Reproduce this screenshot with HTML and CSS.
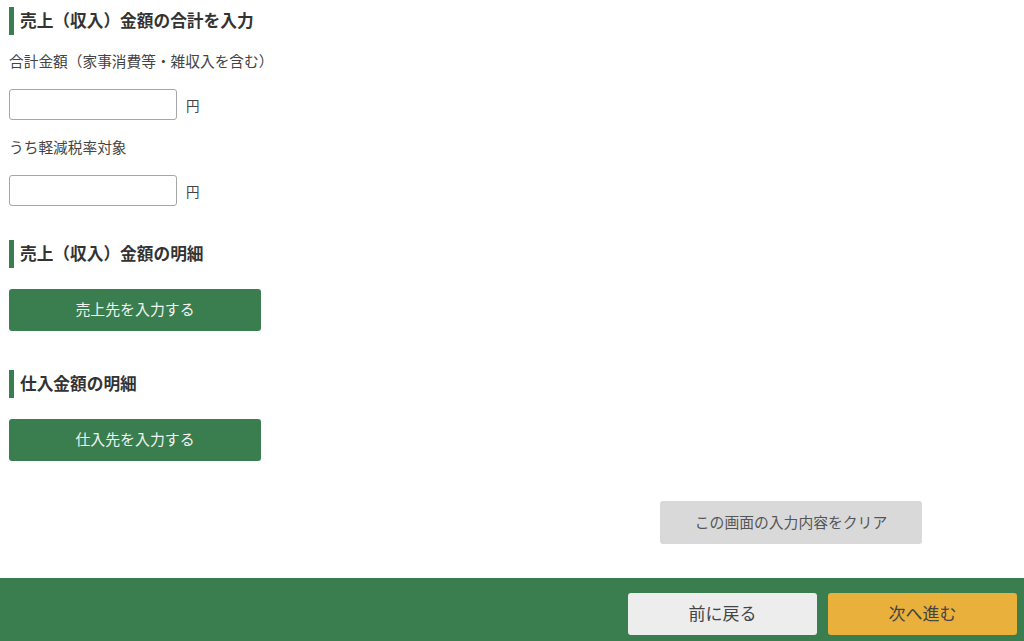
FILE: index.html
```html
<!DOCTYPE html>
<html lang="ja">
<head>
    <meta charset="UTF-8">
    <meta name="viewport" content="width=device-width, initial-scale=1.0">
    <title>売上（収入）金額の入力</title>
    <link rel="stylesheet" href="styles.css">
</head>
<body>
    <div class="page">
        <main class="content">
            <h2 class="section-title">売上（収入）金額の合計を入力</h2>
            <div class="field">
                <label for="total">合計金額（家事消費等・雑収入を含む）</label>
                <div class="amount">
                    <input type="text" id="total">
                    <span class="unit">円</span>
                </div>
            </div>
            <div class="field">
                <label for="reduced">うち軽減税率対象</label>
                <div class="amount">
                    <input type="text" id="reduced">
                    <span class="unit">円</span>
                </div>
            </div>

            <h2 class="section-title spaced">売上（収入）金額の明細</h2>
            <button class="btn-green">売上先を入力する</button>

            <h2 class="section-title spaced">仕入金額の明細</h2>
            <button class="btn-green">仕入先を入力する</button>

            <div class="clear-row">
                <button class="btn-clear">この画面の入力内容をクリア</button>
            </div>
        </main>

        <footer class="footer">
            <button class="btn-back">前に戻る</button>
            <button class="btn-next">次へ進む</button>
        </footer>
    </div>
</body>
</html>
```

FILE: styles.css
```css
body {
    margin: 0;
    font-family: "Noto Sans CJK JP", "Noto Sans", sans-serif;
    color: #333;
    background: #fff;
}

.page {
    display: flex;
    flex-direction: column;
    height: 100vh;
}

.content {
    flex: 1;
    width: 913px;
    padding: 7px 0 0 9px;
    display: flex;
    flex-direction: column;
    align-items: flex-start;
}

.section-title {
    margin: 0;
    height: 28px;
    line-height: 27px;
    border-left: 5px solid #3a7d4f;
    padding-left: 6px;
    font-size: 16.7px;
    font-weight: bold;
    color: #333;
}

.section-title.spaced {
    margin-top: 34px;
}

.field {
    margin-top: 16px;
}

.field + .field {
    margin-top: 17px;
}

label {
    display: block;
    font-size: 14.7px;
    line-height: 20px;
    color: #444;
    margin-bottom: 18px;
}

.amount {
    display: flex;
    align-items: center;
    gap: 9px;
}

input[type="text"] {
    width: 168px;
    height: 31px;
    box-sizing: border-box;
    border: 1px solid #a6a6a6;
    border-radius: 3px;
    padding: 4px 6px;
    font-size: 14px;
}

.unit {
    font-size: 13.5px;
    color: #444;
}

button {
    font-family: inherit;
    border: none;
    border-radius: 3px;
    cursor: pointer;
    padding: 0 0 3px;
}

.btn-green {
    margin-top: 21px;
    width: 252px;
    height: 42px;
    background: #3a7d4f;
    color: #f0f5f1;
    font-size: 14.9px;
}

.btn-green + .section-title.spaced {
    margin-top: 39px;
}

.clear-row {
    align-self: stretch;
    display: flex;
    justify-content: flex-end;
    margin-top: 40px;
}

.btn-clear {
    width: 262px;
    height: 43px;
    background: #d9d9d9;
    color: #555;
    font-size: 14.8px;
}

.footer {
    height: 63px;
    box-sizing: border-box;
    background: #3a7d4f;
    display: flex;
    justify-content: flex-end;
    gap: 11px;
    padding: 15px 7px 6px;
}

.btn-back,
.btn-next {
    width: 189px;
    height: 42px;
    font-size: 17px;
    color: #444;
}

.btn-back {
    background: #ededed;
}

.btn-next {
    background: #e9b03b;
}
```
